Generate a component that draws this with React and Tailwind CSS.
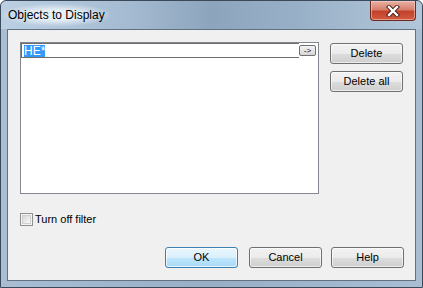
import { useState } from 'react'

const Btn = ({ label, primary }) => (
    <button
        className={
            primary
                ? "w-[73px] h-[21px] rounded-[3px] border border-[#3c7fb1] bg-[linear-gradient(#eaf6fd_0%,#d9f0fc_50%,#bee6fd_51%,#a7d9f5_100%)] text-[11px] text-black shadow-[inset_0_0_0_1px_rgba(255,255,255,0.7)]"
                : "w-[73px] h-[21px] rounded-[3px] border border-[#707070] bg-[linear-gradient(#f2f2f2_0%,#ebebeb_50%,#dddddd_51%,#cfcfcf_100%)] text-[11px] text-black shadow-[inset_0_0_0_1px_rgba(255,255,255,0.6)]"
        }
    >
        {label}
    </button>
)

const App = () => {
    const [filterOff, setFilterOff] = useState(false)

    return (
        <div className="w-[423px] h-[288px] bg-white font-['Liberation_Sans',Arial,sans-serif]">
            <div className="flex h-full flex-col rounded-t-[6px] border border-[#3b4a5b] bg-[linear-gradient(90deg,#a9bed3,#98afc6_50%,#a9bed3)]">
                {/* Title bar */}
                <div className="flex h-[28px] rounded-t-[6px] bg-[linear-gradient(90deg,#bcd0e3_0%,#a5bbd1_30%,#8ca5bd_50%,#98b0c7_70%,#b2c6d9_100%)]">
                    <div className="mt-[3px] ml-[2px] h-[22px] px-[5px] pt-[4px] text-[12px] leading-[14px] text-black bg-[radial-gradient(ellipse_at_center,rgba(235,242,248,0.95)_30%,rgba(235,242,248,0)_75%)]">
                        Objects to Display
                    </div>
                    <button className="ml-auto mr-[6px] flex h-[20px] w-[46px] items-center justify-center rounded-b-[4px] border border-t-0 border-[#6b2a20] bg-[linear-gradient(#e8b1a5_0%,#d7806d_45%,#c4422c_55%,#d25a40_100%)] shadow-[inset_0_0_0_1px_rgba(255,220,210,0.5)]">
                        <svg width="14" height="12" viewBox="0 0 14 12">
                            <path d="M3 2 L11 10 M11 2 L3 10" stroke="#4a1a14" strokeWidth="4.2" strokeLinecap="square" />
                            <path d="M3 2 L11 10 M11 2 L3 10" stroke="#ffffff" strokeWidth="2.4" strokeLinecap="square" />
                        </svg>
                    </button>
                </div>

                {/* Client */}
                <div className="flex-1 px-[6px] pb-[6px]">
                    <div className="flex h-full flex-col border border-[#5f7183] bg-[#f0f0f0] pl-[12px] pr-[11px] pt-[12px] text-[11px] text-black">
                        <div className="flex">
                            <div className="h-[152px] w-[299px] border border-[#828790] bg-white">
                                <div className="flex items-start">
                                    <div className="h-[15px] w-[278px] border-t border-l border-b border-[#6d6d6d] pl-[2px] pt-[1px]">
                                        <span className="block w-[21px] h-[12px] bg-[#3399ff] text-[12px] leading-[12px] text-white">HE*</span>
                                    </div>
                                    <div className="mt-[2px] flex h-[11px] w-[17px] items-center justify-center rounded-[2px] border border-[#707070] bg-[linear-gradient(#f4f4f4,#d6d6d6)] text-[8px] leading-none">
                                        -&gt;
                                    </div>
                                </div>
                            </div>
                            <div className="ml-[11px] flex flex-col gap-[7px] pt-[1px]">
                                <Btn label="Delete" />
                                <Btn label="Delete all" />
                            </div>
                        </div>

                        <label className="mt-[19px] flex items-center gap-[2px]">
                            <span
                                onClick={() => setFilterOff(!filterOff)}
                                className="flex h-[13px] w-[13px] items-center justify-center border border-[#8e8f8f] bg-[#f4f4f4]"
                            >
                                <span className="block h-[9px] w-[9px] border border-[#d0d0d0] bg-[linear-gradient(135deg,#d7d7d7,#f9f9f9)]" />
                            </span>
                            <span className="leading-[13px]">Turn off filter</span>
                        </label>

                        <div className="mt-[21px] flex justify-end gap-[9px]">
                            <div className="mr-[2px]">
                                <Btn label="OK" primary />
                            </div>
                            <Btn label="Cancel" />
                            <Btn label="Help" />
                        </div>
                    </div>
                </div>
            </div>
        </div>
    )
}

export default App
